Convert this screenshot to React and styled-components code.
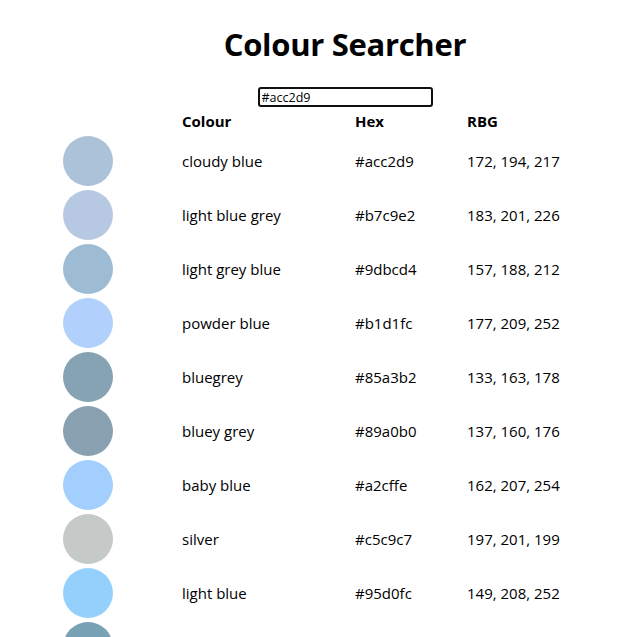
import React, { useState } from 'react';
import styled, { createGlobalStyle } from 'styled-components';

const colours = [
  { name: 'cloudy blue', hex: '#acc2d9' },
  { name: 'light blue grey', hex: '#b7c9e2' },
  { name: 'light grey blue', hex: '#9dbcd4' },
  { name: 'powder blue', hex: '#b1d1fc' },
  { name: 'bluegrey', hex: '#85a3b2' },
  { name: 'bluey grey', hex: '#89a0b0' },
  { name: 'baby blue', hex: '#a2cffe' },
  { name: 'silver', hex: '#c5c9c7' },
  { name: 'light blue', hex: '#95d0fc' },
  { name: 'greyblue', hex: '#77a1b5' },
  { name: 'pale grey', hex: '#fdfdfe' },
  { name: 'grey blue', hex: '#6b8ba4' },
];

const toRgb = (hex) => {
  const n = parseInt(hex.slice(1), 16);
  return `${(n >> 16) & 255}, ${(n >> 8) & 255}, ${n & 255}`;
};

const GlobalStyle = createGlobalStyle`
  body {
    margin: 0;
    font-family: "Open Sans", "Noto Sans", sans-serif;
    color: #000;
    background: #fff;
  }
`;

const Page = styled.div`
  padding-left: 53px;
  display: flex;
  flex-direction: column;
  align-items: center;
`;

const Title = styled.h1`
  margin: 24px 0 23px;
  font-size: 31px;
  line-height: 40px;
  font-weight: 700;
  letter-spacing: -0.3px;
`;

const Search = styled.input`
  box-sizing: border-box;
  width: 175px;
  height: 20px;
  padding: 1px 2px;
  border: 2px solid #101010;
  border-radius: 3px;
  font-family: "Open Sans", "Noto Sans", sans-serif;
  font-size: 12.5px;
  outline: none;
`;

const Table = styled.div`
  align-self: stretch;
  margin: 2px 0 0 10px;
  display: flex;
  flex-direction: column;
`;

const Row = styled.div`
  display: grid;
  grid-template-columns: 119px 173px 112px 1fr;
  align-items: center;
  padding: ${(p) => (p.$head ? '0' : '3px 0 1px')};
  height: ${(p) => (p.$head ? '24px' : '50px')};
  font-size: 15px;
  font-weight: ${(p) => (p.$head ? 700 : 400)};
`;

const Swatch = styled.div`
  width: 50px;
  height: 50px;
  border-radius: 50%;
  background: ${(p) => p.$colour};
`;

export default function App() {
  const [query, setQuery] = useState('#acc2d9');

  return (
    <Page>
      <GlobalStyle />
      <Title>Colour Searcher</Title>
      <Search value={query} onChange={(e) => setQuery(e.target.value)} />
      <Table>
        <Row $head>
          <span />
          <span>Colour</span>
          <span>Hex</span>
          <span>RBG</span>
        </Row>
        {colours.map((c) => (
          <Row key={c.hex}>
            <Swatch $colour={c.hex} />
            <span>{c.name}</span>
            <span>{c.hex}</span>
            <span>{toRgb(c.hex)}</span>
          </Row>
        ))}
      </Table>
    </Page>
  );
}
